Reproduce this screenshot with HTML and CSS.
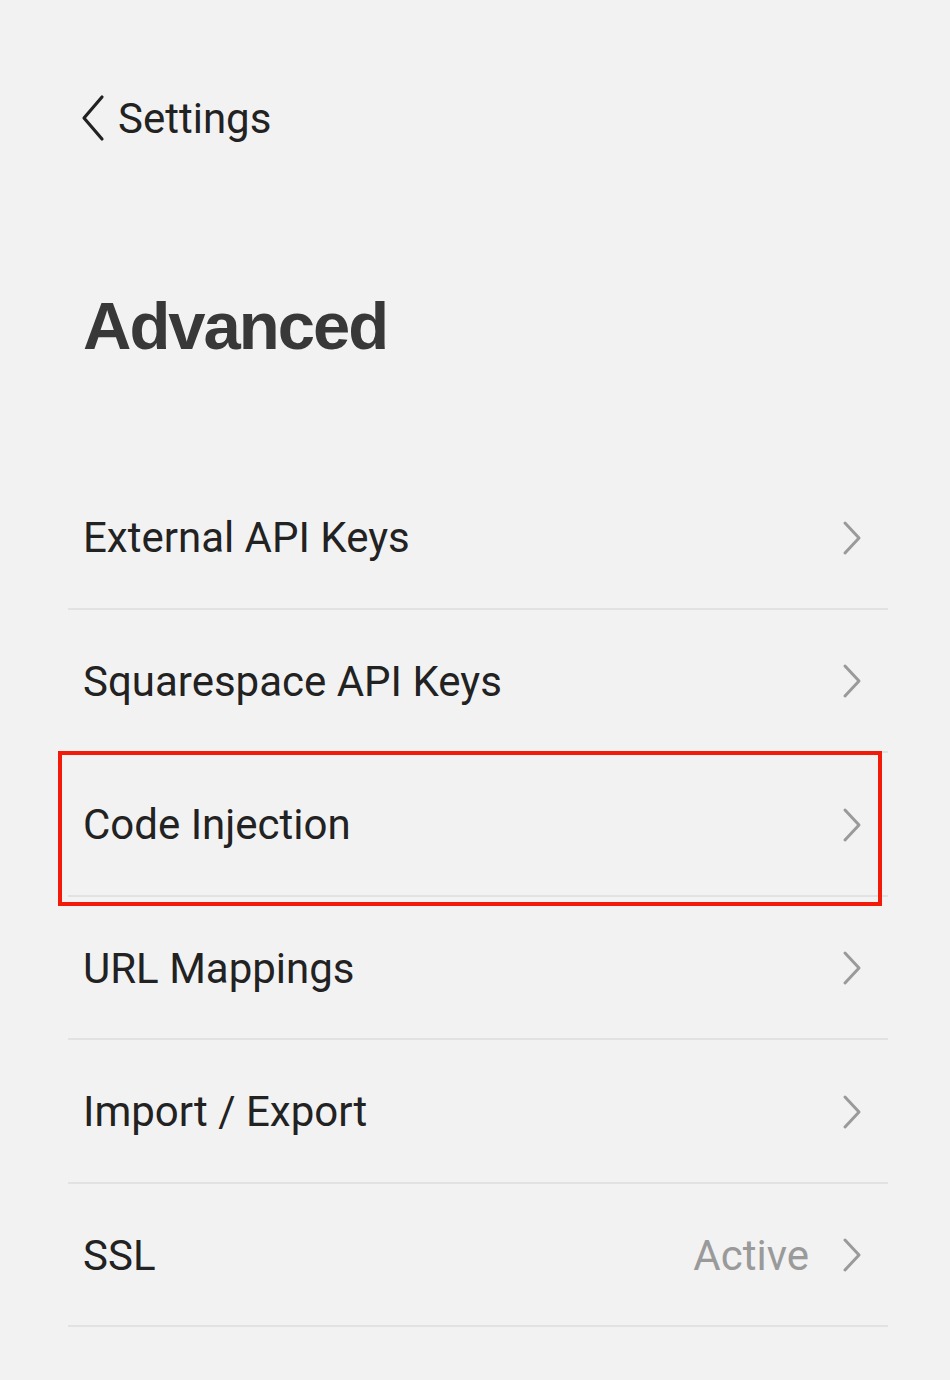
FILE: index.html
```html
<!DOCTYPE html>
<html>
<head>
    <title>Advanced</title>
    <link rel="stylesheet" href="styles.css">
</head>
<body>
    <div class="page">
        <a class="back" href="#">
            <svg class="back-icon" width="26" height="48" viewBox="0 0 26 48"><path d="M22 3 L4 24 L22 45" fill="none" stroke="#222" stroke-width="3.2" stroke-linecap="round" stroke-linejoin="round"/></svg>
            <span>Settings</span>
        </a>

        <h1 class="title">Advanced</h1>

        <ul class="list">
            <li class="row">
                <span class="label">External API Keys</span>
                <svg class="chev" width="20" height="36" viewBox="0 0 20 36"><path d="M3 3 L17 18 L3 33" fill="none" stroke="#9a9a9a" stroke-width="3" stroke-linecap="round" stroke-linejoin="round"/></svg>
            </li>
            <li class="row">
                <span class="label">Squarespace API Keys</span>
                <svg class="chev" width="20" height="36" viewBox="0 0 20 36"><path d="M3 3 L17 18 L3 33" fill="none" stroke="#9a9a9a" stroke-width="3" stroke-linecap="round" stroke-linejoin="round"/></svg>
            </li>
            <li class="row">
                <span class="label">Code Injection</span>
                <svg class="chev" width="20" height="36" viewBox="0 0 20 36"><path d="M3 3 L17 18 L3 33" fill="none" stroke="#9a9a9a" stroke-width="3" stroke-linecap="round" stroke-linejoin="round"/></svg>
                <div class="highlight"></div>
            </li>
            <li class="row">
                <span class="label">URL Mappings</span>
                <svg class="chev" width="20" height="36" viewBox="0 0 20 36"><path d="M3 3 L17 18 L3 33" fill="none" stroke="#9a9a9a" stroke-width="3" stroke-linecap="round" stroke-linejoin="round"/></svg>
            </li>
            <li class="row">
                <span class="label">Import / Export</span>
                <svg class="chev" width="20" height="36" viewBox="0 0 20 36"><path d="M3 3 L17 18 L3 33" fill="none" stroke="#9a9a9a" stroke-width="3" stroke-linecap="round" stroke-linejoin="round"/></svg>
            </li>
            <li class="row">
                <span class="label">SSL</span>
                <span class="value">Active</span>
                <svg class="chev" width="20" height="36" viewBox="0 0 20 36"><path d="M3 3 L17 18 L3 33" fill="none" stroke="#9a9a9a" stroke-width="3" stroke-linecap="round" stroke-linejoin="round"/></svg>
            </li>
        </ul>
    </div>
</body>
</html>
```
FILE: styles.css
```css
/* page */
body {
    margin: 0;
    background-color: #f2f2f2;
    font-family: Roboto, "Liberation Sans", Arial, sans-serif;
    color: #222;
}

.page {
    padding: 94px 62px 0 68px;
}

/* back link */
.back {
    display: flex;
    align-items: center;
    gap: 12px;
    margin-left: 15px;
    height: 48px;
    color: #222;
    text-decoration: none;
    font-size: 42px;
}

.back-icon {
    margin-left: -3px;
}

/* title */
.title {
    margin: 144px 0 0 15px;
    height: 80px;
    line-height: 80px;
    font-family: "Liberation Sans", Arial, sans-serif;
    font-size: 67px;
    font-weight: bold;
    letter-spacing: -2px;
    color: #383838;
}

/* list */
.list {
    list-style: none;
    margin: 100px 0 0 0;
    padding: 0;
}

.row {
    position: relative;
    display: flex;
    align-items: center;
    padding: 2px 26px 0 15px;
    box-sizing: border-box;
    height: 143.5px;
    border-bottom: 2px solid #e2e2e2;
}

.label {
    flex: 1;
    font-size: 42px;
    color: #222;
}

.value {
    font-size: 42px;
    color: #9a9a9a;
    margin-right: 33px;
}

.chev {
    display: block;
}

/* red highlight box */
.highlight {
    position: absolute;
    top: -2px;
    left: -10px;
    right: 6px;
    bottom: -11px;
    border: 4px solid #f31a0a;
}
```
